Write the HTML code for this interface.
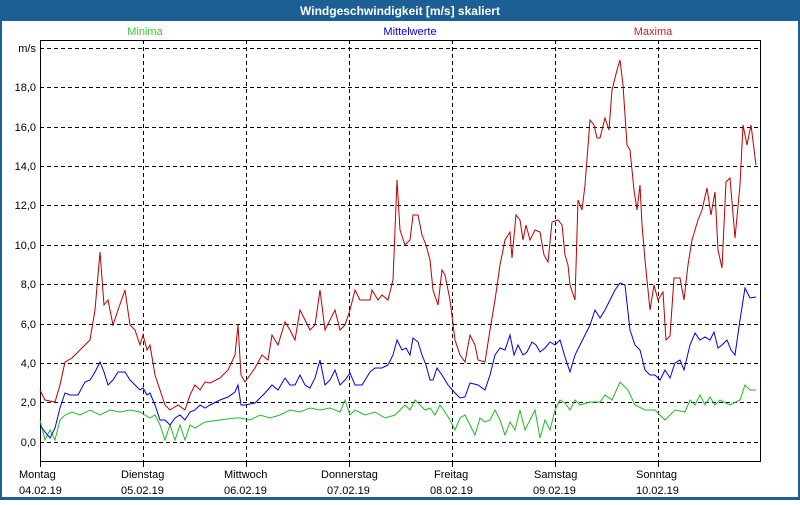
<!DOCTYPE html>
<html><head><meta charset="utf-8"><style>
body{margin:0;width:800px;height:500px;overflow:hidden;font-family:"Liberation Sans",sans-serif}
</style></head><body>
<svg width="800" height="500" xmlns="http://www.w3.org/2000/svg" font-family="Liberation Sans, sans-serif" font-size="11">
<rect x="0" y="0" width="800" height="500" fill="#1c5f95"/>
<rect x="2" y="21" width="796" height="476" fill="#fff"/>
<text x="400" y="15" fill="#fff" font-weight="bold" font-size="12" text-anchor="middle">Windgeschwindigkeit [m/s] skaliert</text>
<text x="145" y="35" fill="#33cc33" text-anchor="middle">Minima</text>
<text x="410" y="35" fill="#0000e0" text-anchor="middle">Mittelwerte</text>
<text x="653" y="35" fill="#cc2020" text-anchor="middle">Maxima</text>
<g stroke="#000" stroke-dasharray="4,3" stroke-width="1">
<path d="M40 48.5H760M40 87.5H760M40 127.5H760M40 166.5H760M40 205.5H760M40 245.5H760M40 284.5H760M40 324.5H760M40 363.5H760M40 402.5H760M40 442.5H760"/>
<path d="M143.5 40V461M246.5 40V461M349.5 40V461M452.5 40V461M555.5 40V461M658.5 40V461"/>
</g>
<rect x="40.5" y="40.5" width="720" height="421" fill="none" stroke="#000"/>
<path d="M40.5 461V467M143.5 461V467M246.5 461V467M349.5 461V467M452.5 461V467M555.5 461V467M658.5 461V467" stroke="#000"/>
<g text-anchor="end" fill="#000">
<text x="36" y="52">m/s</text><text x="36" y="91">18,0</text><text x="36" y="131">16,0</text><text x="36" y="170">14,0</text><text x="36" y="209">12,0</text><text x="36" y="249">10,0</text><text x="36" y="288">8,0</text><text x="36" y="328">6,0</text><text x="36" y="367">4,0</text><text x="36" y="406">2,0</text><text x="36" y="446">0,0</text>
</g>
<g fill="#000">
<text x="19" y="478">Montag</text><text x="19" y="494">04.02.19</text>
<text x="121" y="478">Dienstag</text><text x="121" y="494">05.02.19</text>
<text x="224" y="478">Mittwoch</text><text x="224" y="494">06.02.19</text>
<text x="321" y="478">Donnerstag</text><text x="327" y="494">07.02.19</text>
<text x="434" y="478">Freitag</text><text x="430" y="494">08.02.19</text>
<text x="534" y="478">Samstag</text><text x="533" y="494">09.02.19</text>
<text x="636" y="478">Sonntag</text><text x="636" y="494">10.02.19</text>
</g>
<polyline fill="none" stroke="#22bb22" points="40,420 45,440 50,430 55,440 60,420 65,415 72,412 80,415 90,410 100,415 110,410 120,412 130,410 140,412 150,418 155,415 160,425 165,440 170,425 175,440 180,425 185,440 190,425 195,428 205,422 220,420 235,418 240,418 250,420 260,415 270,418 280,415 290,410 300,412 310,408 320,410 330,408 340,412 345,400 350,415 355,410 365,415 375,412 385,418 395,415 405,405 410,410 415,400 420,405 425,410 430,408 435,415 440,405 445,412 450,420 455,430 460,418 465,415 470,425 475,435 480,418 485,422 490,420 495,410 500,420 505,435 510,422 515,430 520,410 525,430 530,420 535,410 540,438 545,420 550,430 555,410 560,400 565,403 570,410 575,400 580,405 590,402 600,402 605,395 612,400 620,382 628,390 635,405 645,410 655,410 665,420 675,410 685,412 690,400 695,405 700,395 705,405 710,397 715,405 720,400 730,405 740,400 745,385 750,390 756,390"/>
<polyline fill="none" stroke="#0000dd" points="40,425 45,432 50,438 55,428 60,408 65,393 70,395 78,395 85,382 90,380 95,372 100,362 104,372 108,385 113,380 118,372 125,372 130,380 135,385 140,390 143,388 147,395 150,393 155,405 160,420 165,420 170,425 175,418 180,415 185,420 190,412 195,410 200,405 205,408 210,405 220,400 228,397 235,392 238,385 241,405 245,405 255,403 265,393 272,385 278,390 285,378 290,385 295,385 300,375 305,385 310,388 315,378 320,360 325,385 330,380 335,370 340,385 345,380 350,373 355,385 362,385 370,372 375,368 382,368 388,365 393,355 397,340 402,350 406,348 410,355 413,338 418,342 422,355 426,365 430,380 433,380 437,368 442,375 448,385 455,393 460,398 465,397 470,383 478,385 485,390 490,375 495,355 500,348 505,350 510,335 514,355 518,345 523,355 527,352 532,342 536,345 540,352 545,348 550,342 555,345 560,340 565,357 570,372 575,355 580,345 585,335 590,325 595,310 600,318 605,310 610,300 615,290 620,283 625,285 630,330 635,345 640,350 645,370 650,375 655,375 660,380 665,370 670,378 675,363 680,360 684,370 690,345 695,333 700,340 705,337 710,340 714,332 718,348 722,345 727,340 731,350 735,355 740,320 745,288 750,298 756,297"/>
<polyline fill="none" stroke="#bb0000" points="40,390 45,400 55,402 60,385 65,362 72,358 80,350 90,340 95,310 100,252 104,305 108,300 113,325 118,310 125,290 130,325 135,330 140,345 143,335 147,350 150,345 155,375 160,390 165,405 170,410 178,405 185,410 190,395 195,385 200,390 205,382 210,383 220,378 228,370 235,355 238,325 241,375 245,382 250,375 255,368 262,355 268,360 272,335 278,345 285,322 290,330 295,340 300,310 305,320 310,330 315,325 320,290 325,330 330,320 335,310 340,330 345,325 350,310 355,290 360,300 365,300 370,300 372,290 378,300 382,295 388,300 393,280 397,180 400,230 405,245 410,240 413,215 418,215 422,235 426,245 430,260 433,290 438,305 442,270 445,275 450,300 455,340 460,355 465,362 470,335 475,345 478,360 485,362 490,330 495,300 500,265 505,240 510,232 512,258 516,215 520,220 523,240 526,225 530,240 535,230 540,232 544,255 548,262 552,222 558,220 562,225 565,255 568,265 570,285 575,300 578,200 582,210 585,185 590,120 594,125 597,138 600,138 605,118 609,130 612,90 617,70 620,60 623,85 627,145 630,150 634,190 637,210 640,185 642,225 645,260 650,310 654,285 658,300 663,292 666,340 670,336 674,278 680,278 684,300 688,265 692,240 698,220 702,210 707,188 711,215 715,192 718,250 722,268 726,182 730,178 735,238 740,185 743,125 747,145 751,125 756,165"/>
</svg>
</body></html>
